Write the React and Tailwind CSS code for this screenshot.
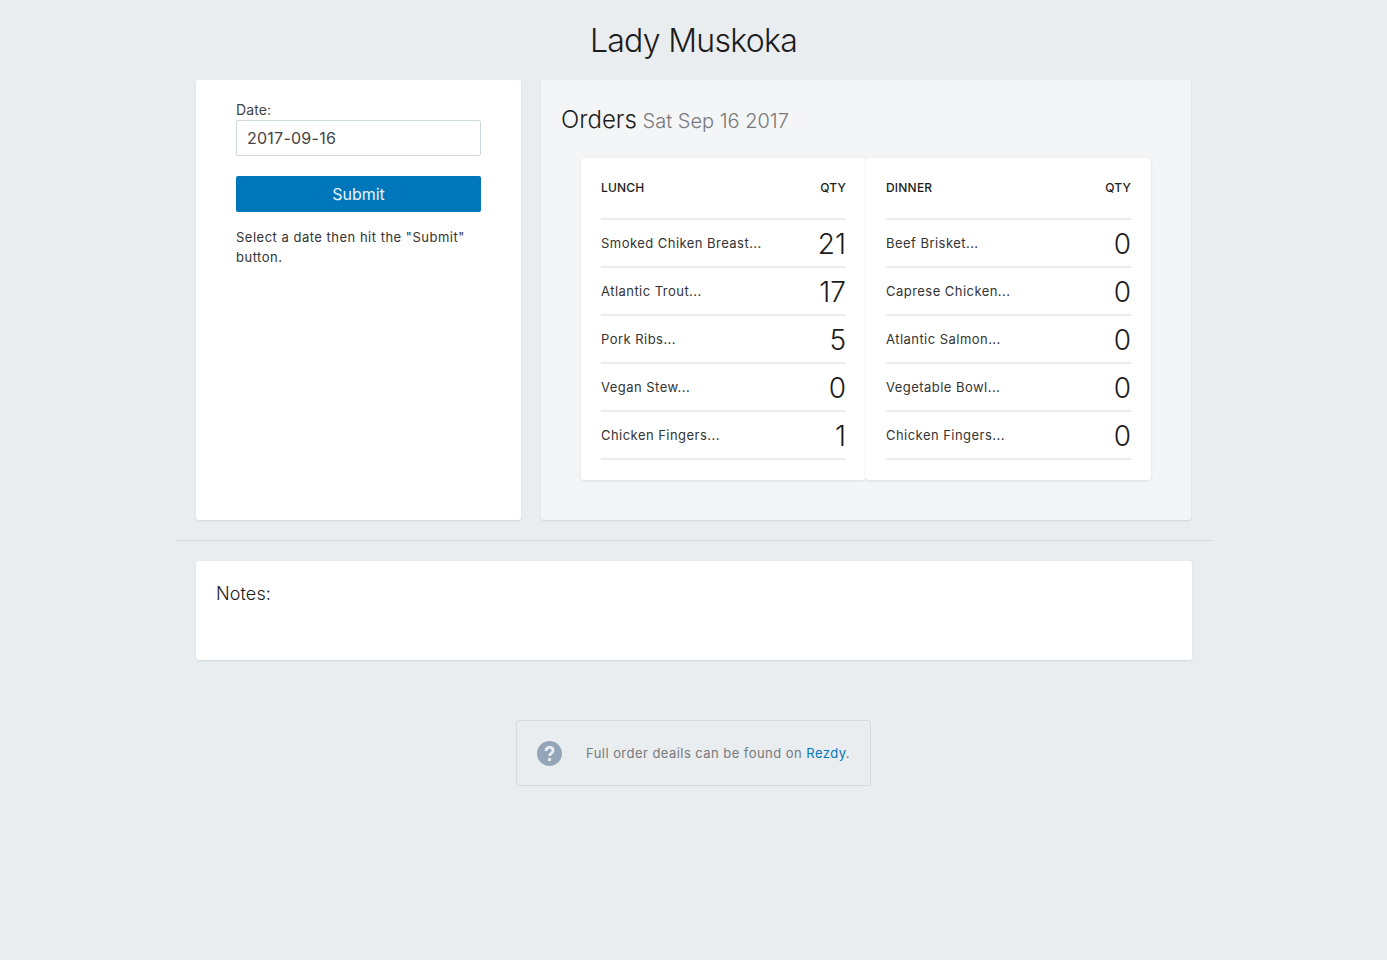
const lunch = [
  ["Smoked Chiken Breast...", 21],
  ["Atlantic Trout...", 17],
  ["Pork Ribs...", 5],
  ["Vegan Stew...", 0],
  ["Chicken Fingers...", 1],
];

const dinner = [
  ["Beef Brisket...", 0],
  ["Caprese Chicken...", 0],
  ["Atlantic Salmon...", 0],
  ["Vegetable Bowl...", 0],
  ["Chicken Fingers...", 0],
];

function OrderTable({ title, items }) {
  return (
    <div className="w-[285px] h-[322px] bg-white rounded-[3px] shadow-[0_1px_3px_rgba(0,0,0,0.1)] px-5 shrink-0">
      <div className="flex justify-between items-center h-[62px] border-b-2 border-[#e9edf0] text-xs font-medium text-[#1c1c1c] tracking-[0.2px]">
        <span>{title}</span>
        <span>QTY</span>
      </div>
      {items.map(([name, qty]) => (
        <div key={name} className="flex justify-between items-center h-[48px] pt-[2px] border-b-2 border-[#e9edf0]">
          <span className="text-[13px] tracking-[0.46px] text-[#333]">{name}</span>
          <span className="text-[28px] leading-none font-light text-[#1c1c1c]">{qty}</span>
        </div>
      ))}
    </div>
  );
}

export default function App() {
  return (
    <div className="min-h-[960px] bg-[#e9edf0] font-['Inter',sans-serif] text-[#1c1c1c]">
      <h1 className="h-[80px] pt-[21px] text-center text-[32px] leading-[40px] font-light tracking-[-0.7px]">Lady Muskoka</h1>

      <div className="w-[1036px] ml-[176px]">
        <div className="flex gap-5 px-5 pb-5 border-b border-[#d5dade]">
          <div className="w-[325px] h-[440px] bg-white rounded-[3px] shadow-[0_1px_2px_rgba(0,0,0,0.1)] px-10 pt-5">
            <label className="block text-sm leading-5 tracking-[0.1px] text-[#444]">Date:</label>
            <input
              readOnly
              value="2017-09-16"
              className="block w-full h-9 px-[10px] bg-white border border-[#ccd6dd] rounded-[2px] text-base tracking-[0.25px] text-[#444] outline-none"
            />
            <button className="block w-full h-9 mt-5 bg-[#0077bb] rounded-[2px] text-base text-[#e8f3fa]">Submit</button>
            <p className="mt-[15px] text-[13px] leading-5 tracking-[0.5px] text-[#333]">
              Select a date then hit the "Submit" button.
            </p>
          </div>

          <div className="w-[650px] h-[440px] bg-[#f4f5f7] rounded-[3px] shadow-[0_1px_2px_rgba(0,0,0,0.1)] pl-5 pt-[23px]">
            <h2 className="text-2xl leading-[34px] font-light">
              Orders <span className="-ml-px text-xl text-[#77797b]">Sat Sep 16 2017</span>
            </h2>
            <div className="flex ml-5 mt-[21px]">
              <OrderTable title="LUNCH" items={lunch} />
              <OrderTable title="DINNER" items={dinner} />
            </div>
          </div>
        </div>

        <div className="ml-5 mt-5 w-[996px] h-[99px] bg-white rounded-[3px] shadow-[0_1px_2px_rgba(0,0,0,0.1)] px-5 pt-5">
          <h3 className="text-lg leading-[26px] font-light tracking-[0.1px] text-[#1c1c1c]">Notes:</h3>
        </div>
      </div>

      <div className="flex items-center w-[355px] h-[66px] mx-auto mt-[60px] border border-[#d5dade] rounded-[3px] pl-5">
        <svg viewBox="0 0 24 24" className="w-[25px] h-[25px] shrink-0">
          <circle cx="12" cy="12" r="12" fill="#93a5b7" />
          <path d="M8.6 9.6c0-2.1 1.5-3.4 3.5-3.4s3.4 1.2 3.4 3c0 2.6-3.5 2.6-3.5 5.2" fill="none" stroke="#e9edf0" strokeWidth="2.6" />
          <rect x="10.6" y="16.4" width="2.9" height="2.9" rx="0.5" fill="#e9edf0" />
        </svg>
        <p className="ml-[24px] pt-px text-[13px] tracking-[0.45px] text-[#77797b] whitespace-nowrap">
          Full order deails can be found on <a href="#" className="text-[#0077bb]">Rezdy</a>.
        </p>
      </div>
    </div>
  );
}
